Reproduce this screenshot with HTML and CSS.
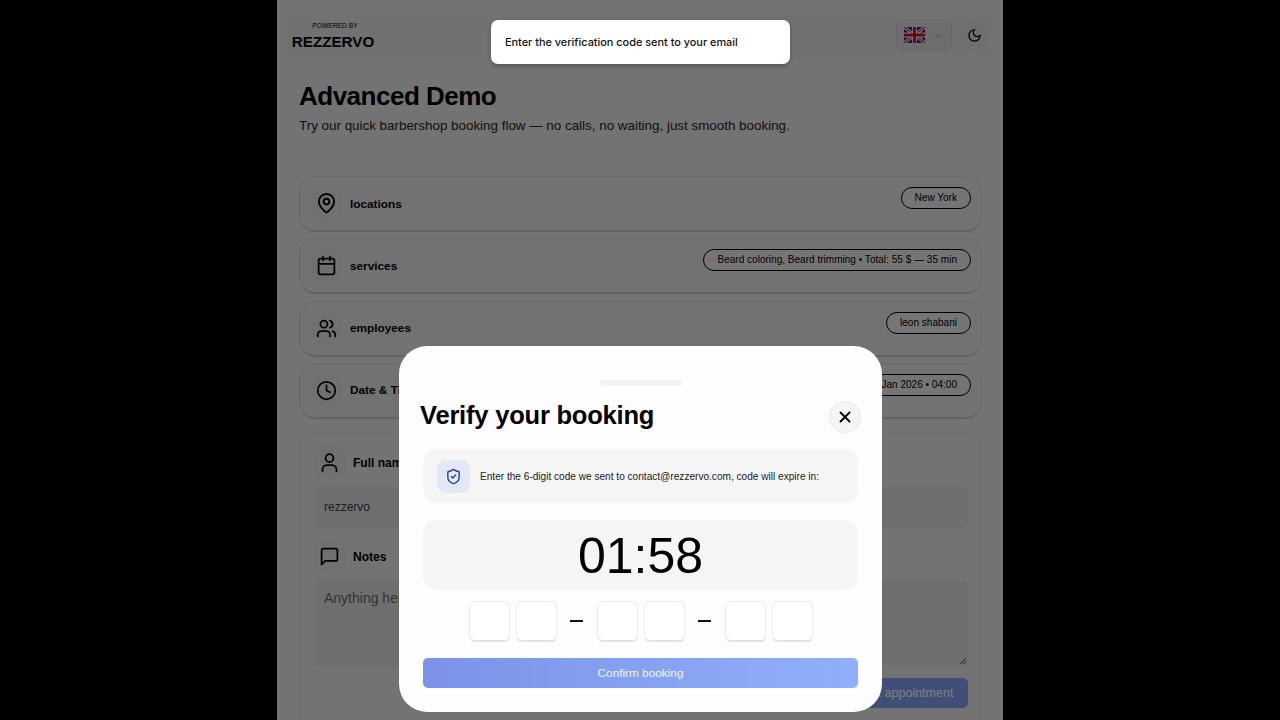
FILE: index.html
```html
<!DOCTYPE html>
<html>
    <head>
        <link rel="stylesheet" href="styles.css">
    </head>
    <body>
        <div class="page">
            <header class="topbar">
                <div class="brand">
                    <span class="brand-small">POWERED BY</span>
                    <span class="brand-name">REZZERVO</span>
                </div>
                <div class="top-actions">
                    <div class="lang">
                        <svg class="flag" viewBox="0 0 60 40" preserveAspectRatio="none">
                            <rect width="60" height="40" fill="#1c2a80"/>
                            <path d="M0 0L60 40M60 0L0 40" stroke="#fff" stroke-width="8"/>
                            <path d="M0 0L60 40M60 0L0 40" stroke="#c8102e" stroke-width="3"/>
                            <path d="M30 0V40M0 20H60" stroke="#fff" stroke-width="13"/>
                            <path d="M30 0V40M0 20H60" stroke="#c8102e" stroke-width="8"/>
                        </svg>
                        <svg class="chev" viewBox="0 0 24 24"><path d="M6 9l6 6 6-6"/></svg>
                    </div>
                    <div class="theme">
                        <svg class="icon-moon" viewBox="0 0 24 24"><path d="M12 3a6 6 0 0 0 9 9 9 9 0 1 1-9-9z"/></svg>
                    </div>
                </div>
            </header>

            <h1 class="title">Advanced Demo</h1>
            <p class="subtitle">Try our quick barbershop booking flow — no calls, no waiting, just smooth booking.</p>

            <div class="steps">
                <div class="step">
                    <div class="step-left">
                        <div class="icon-box">
                            <svg class="icon" viewBox="1 1 22 22"><path d="M20 10c0 5-5.500 9.700-7.400 11.200a1 1 0 0 1-1.200 0C9.500 19.700 4 15 4 10a8 8 0 0 1 16 0z"/><circle cx="12" cy="10" r="3"/></svg>
                        </div>
                        <span class="step-name">locations</span>
                    </div>
                    <span class="pill">New York</span>
                </div>
                <div class="step">
                    <div class="step-left">
                        <div class="icon-box">
                            <svg class="icon" viewBox="0 0 24 24"><path d="M8 2v4M16 2v4"/><rect x="3" y="4" width="18" height="18" rx="2"/><path d="M3 10h18"/></svg>
                        </div>
                        <span class="step-name">services</span>
                    </div>
                    <span class="pill">Beard coloring, Beard trimming • Total: 55 $ — 35 min</span>
                </div>
                <div class="step">
                    <div class="step-left">
                        <div class="icon-box">
                            <svg class="icon" viewBox="0 0 24 24"><path d="M16 21v-2a4 4 0 0 0-4-4H6a4 4 0 0 0-4 4v2"/><circle cx="9" cy="7" r="4"/><path d="M22 21v-2a4 4 0 0 0-3-3.870M16 3.130a4 4 0 0 1 0 7.750"/></svg>
                        </div>
                        <span class="step-name">employees</span>
                    </div>
                    <span class="pill">leon shabani</span>
                </div>
                <div class="step">
                    <div class="step-left">
                        <div class="icon-box">
                            <svg class="icon" viewBox="0 0 24 24"><circle cx="12" cy="12" r="10"/><path d="M12 6v6l4 2"/></svg>
                        </div>
                        <span class="step-name">Date &amp; Time</span>
                    </div>
                    <span class="pill">12 Jan 2026 • 04:00</span>
                </div>
            </div>

            <form class="details">
                <div class="field-head">
                    <div class="icon-box">
                        <svg class="icon" viewBox="0 0 24 24"><circle cx="12" cy="7" r="4.500"/><path d="M4 22v-2a5 5 0 0 1 5-5h6a5 5 0 0 1 5 5v2"/></svg>
                    </div>
                    <span class="field-name">Full name</span>
                </div>
                <div class="input">rezzervo</div>
                <div class="field-head notes-head">
                    <div class="icon-box">
                        <svg class="icon" viewBox="0 0 24 24"><path d="M21 15a2 2 0 0 1-2 2H7l-4 4V5a2 2 0 0 1 2-2h14a2 2 0 0 1 2 2z"/></svg>
                    </div>
                    <span class="field-name">Notes</span>
                </div>
                <div class="textarea">
                    Anything helpful for your barber?
                    <svg class="grip" viewBox="0 0 10 10"><path d="M1 9L9 1M5 9L9 5"/></svg>
                </div>
                <div class="form-foot">
                    <div class="book-btn">Book appointment</div>
                </div>
            </form>

            <div class="backdrop"></div>

            <div class="toast">Enter the verification code sent to your email</div>

            <div class="modal">
                <div class="handle"></div>
                <div class="modal-head">
                    <h2 class="modal-title">Verify your booking</h2>
                    <div class="close">
                        <svg viewBox="0 0 24 24"><path d="M6 6l12 12M18 6L6 18"/></svg>
                    </div>
                </div>
                <div class="info">
                    <div class="shield-box">
                        <svg class="shield" viewBox="0 0 24 24"><path d="M20 13c0 5-3.500 7.500-7.660 8.950a1 1 0 0 1-.67 0C7.500 20.500 4 18 4 13V6a1 1 0 0 1 1-1c2 0 4.500-1.200 6.240-2.720a1.170 1.170 0 0 1 1.520 0C14.510 3.810 17 5 19 5a1 1 0 0 1 1 1z"/><path d="M9 12l2 2 4-4"/></svg>
                    </div>
                    <span class="info-text">Enter the 6-digit code we sent to contact@rezzervo.com, code will expire in:</span>
                </div>
                <div class="timer">01:58</div>
                <div class="code">
                    <div class="digit"></div>
                    <div class="digit"></div>
                    <span class="dash"></span>
                    <div class="digit"></div>
                    <div class="digit"></div>
                    <span class="dash"></span>
                    <div class="digit"></div>
                    <div class="digit"></div>
                </div>
                <div class="confirm">Confirm booking</div>
            </div>
        </div>
    </body>
</html>
```

FILE: styles.css
```css
html, body {
    margin: 0;
    height: 720px;
    overflow: hidden;
}
body {
    background: #000;
    color: #000;
    font-family: "Liberation Sans", Arial, sans-serif;
}
.page {
    position: relative;
    width: 726px;
    height: 720px;
    margin: 0 auto;
    padding: 10px 21px 0 22px;
    box-sizing: border-box;
    background: #e7e7e7;
    overflow: hidden;
}

/* top bar */
.topbar {
    display: flex;
    justify-content: space-between;
    align-items: center;
    height: 50px;
    margin: 0 -14px;
    padding: 0 8px 0 7px;
    background: #e2e2e2;
    border-radius: 10px;
}
.brand {
    display: flex;
    flex-direction: column;
    align-items: center;
    width: 82px;
}
.brand-small {
    font-size: 6.700px;
    line-height: 9px;
    margin: 1px 0 0 4px;
}
.brand-name {
    font-size: 15.200px;
    font-weight: 700;
    line-height: 18px;
    margin-top: 3px;
}
.top-actions {
    display: flex;
    align-items: center;
    gap: 8px;
}
.lang {
    display: flex;
    align-items: center;
    gap: 7px;
    width: 56px;
    height: 30px;
    padding-left: 7px;
    box-sizing: border-box;
    background: #dcdcdc;
    border: 1px solid #cfcfcf;
    border-radius: 6px;
}
.flag {
    width: 21px;
    height: 16px;
}
.chev {
    width: 11px;
    height: 11px;
    fill: none;
    stroke: #888;
    stroke-width: 2;
}
.theme {
    display: flex;
    align-items: center;
    justify-content: center;
    width: 28px;
    height: 28px;
    background: #dcdcdc;
    border-radius: 50%;
}
.icon-moon {
    width: 15px;
    height: 15px;
    fill: none;
    stroke: #000;
    stroke-width: 2;
}

/* heading */
.title {
    margin: 21px 0 0 0;
    font-size: 26px;
    line-height: 30px;
    font-weight: 700;
    letter-spacing: -0.500px;
}
.subtitle {
    margin: 6px 0 0 0;
    font-size: 13.400px;
    line-height: 18px;
    color: #222;
}

/* steps */
.steps {
    display: flex;
    flex-direction: column;
    gap: 6.300px;
    margin-top: 41px;
}
.step {
    display: flex;
    justify-content: space-between;
    align-items: flex-start;
    height: 56px;
    padding: 10px 10px 0 11px;
    box-sizing: border-box;
    background: #e5e5e5;
    border: 1px solid #d4d4d4;
    border-bottom: 2px solid #c6c6c6;
    border-radius: 16px;
}
.step-left {
    display: flex;
    align-items: center;
    gap: 8px;
    height: 33px;
}
.icon-box {
    display: flex;
    align-items: center;
    justify-content: center;
    width: 31px;
    height: 31px;
    background: #e1e1e1;
    border-radius: 8px;
}
.icon {
    width: 21px;
    height: 21px;
    fill: none;
    stroke: #000;
    stroke-width: 2;
    stroke-linecap: round;
    stroke-linejoin: round;
}
.step-name {
    font-size: 11.800px;
    font-weight: 700;
}
.pill {
    padding: 0 13px;
    height: 20px;
    line-height: 19px;
    font-size: 10.050px;
    background: #eaeaea;
    border: 1px solid #000;
    border-radius: 11px;
}

/* form card */
.details {
    margin-top: 13px;
    height: 320px;
    padding: 14px 13px 0 14px;
    box-sizing: border-box;
    border: 1px solid #e0e0e0;
    border-radius: 16px;
}
.field-head {
    display: flex;
    align-items: center;
    gap: 8px;
    height: 32px;
}
.field-name {
    font-size: 12px;
    font-weight: 700;
}
.input {
    margin-top: 8px;
    height: 41px;
    padding: 0 10px;
    line-height: 41px;
    font-size: 12px;
    color: #3a3a3a;
    background: #dedede;
    border-radius: 5px;
}
.notes-head {
    margin-top: 13px;
}
.textarea {
    position: relative;
    margin-top: 8px;
    height: 85px;
    padding: 9px 10px;
    box-sizing: border-box;
    font-size: 14px;
    color: #666;
    background: #dedede;
    border-radius: 5px;
}
.grip {
    position: absolute;
    right: 1px;
    bottom: 1px;
    width: 8px;
    height: 8px;
    fill: none;
    stroke: #222;
}
.form-foot {
    display: flex;
    justify-content: flex-end;
    margin-top: 12px;
}
.book-btn {
    width: 130px;
    height: 30px;
    line-height: 30px;
    text-align: center;
    font-size: 12.500px;
    color: #fff;
    background: #7f9ef0;
    border-radius: 5px;
}

/* overlays */
.backdrop {
    position: absolute;
    inset: 0;
    background: rgba(0, 0, 0, 0.5);
}
.toast {
    position: absolute;
    top: 20px;
    left: 214px;
    width: 299px;
    height: 44px;
    padding-left: 14px;
    box-sizing: border-box;
    line-height: 44px;
    font-family: Inter, "Liberation Sans", sans-serif;
    font-size: 10.900px;
    font-weight: 500;
    color: #111;
    background: #fff;
    border-radius: 7px;
    box-shadow: 0 2px 4px rgba(0, 0, 0, 0.25);
}
.modal {
    position: absolute;
    top: 346px;
    left: 122px;
    display: flex;
    flex-direction: column;
    width: 483px;
    height: 366px;
    padding: 34px 24px 0 24px;
    box-sizing: border-box;
    background: #fdfdfd;
    border-radius: 28px;
}
.handle {
    align-self: center;
    width: 82px;
    height: 6px;
    background: #f3f3f3;
    border-radius: 3px;
}
.modal-head {
    display: flex;
    justify-content: space-between;
    align-items: center;
    height: 34px;
    margin: 12px 0 0 -3px;
}
.modal-title {
    margin: 0;
    font-size: 25.500px;
    font-weight: 700;
    letter-spacing: -0.200px;
}
.close {
    display: flex;
    align-items: center;
    justify-content: center;
    width: 32px;
    height: 32px;
    margin: 4px -3px 0 0;
    box-sizing: border-box;
    background: #f5f5f5;
    border: 1px solid #e8e8e8;
    border-radius: 50%;
}
.close svg {
    width: 18px;
    height: 18px;
    fill: none;
    stroke: #000;
    stroke-width: 2.500;
    stroke-linecap: round;
}
.info {
    display: flex;
    align-items: center;
    gap: 10px;
    height: 54px;
    margin-top: 17px;
    padding-left: 14px;
    background: #f5f5f5;
    border-radius: 14px;
}
.shield-box {
    display: flex;
    align-items: center;
    justify-content: center;
    width: 33px;
    height: 33px;
    background: #e2e8f6;
    border-radius: 9px;
}
.shield {
    width: 17px;
    height: 17px;
    fill: none;
    stroke: #2b4490;
    stroke-width: 2;
    stroke-linecap: round;
    stroke-linejoin: round;
}
.info-text {
    font-size: 10.100px;
    color: #222;
}
.timer {
    height: 70px;
    margin-top: 17px;
    line-height: 72px;
    text-align: center;
    font-size: 50px;
    background: #f5f5f5;
    border-radius: 14px;
}
.code {
    display: flex;
    justify-content: center;
    align-items: center;
    gap: 6px;
    margin: 11px 0 0 0.500px;
}
.digit {
    width: 41px;
    height: 41px;
    box-sizing: border-box;
    background: #fff;
    border: 1px solid #ececec;
    border-bottom: 2px solid #e2e2e2;
    border-radius: 6px;
}
.dash {
    width: 13px;
    height: 2px;
    margin: 0 7.500px 2px 7.500px;
    background: #111;
}
.confirm {
    height: 30px;
    margin-top: 16px;
    line-height: 30px;
    text-align: center;
    font-size: 11.800px;
    color: #f3f5ff;
    background: linear-gradient(90deg, #7b92e8, #90b0fb);
    border-radius: 5px;
}
```
